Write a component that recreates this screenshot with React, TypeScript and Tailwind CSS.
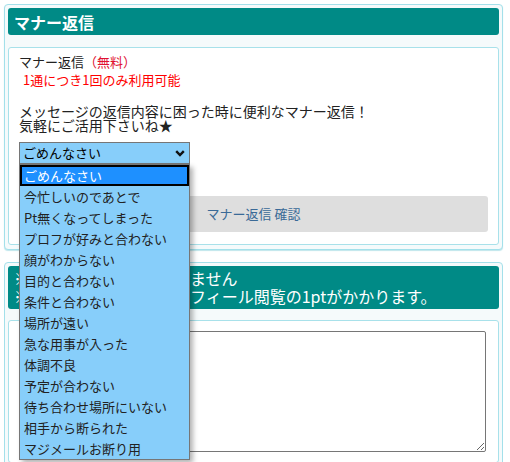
import React from 'react';

const reasons = [
  'ごめんなさい',
  '今忙しいのであとで',
  'Pt無くなってしまった',
  'プロフが好みと合わない',
  '顔がわからない',
  '目的と合わない',
  '条件と合わない',
  '場所が遠い',
  '急な用事が入った',
  '体調不良',
  '予定が合わない',
  '待ち合わせ場所にいない',
  '相手から断られた',
  'マジメールお断り用',
];

function ReasonSelect() {
  return (
    <div className="relative w-[171px]">
      {/* closed select */}
      <div className="flex h-[22px] items-center justify-between border border-[#767676] bg-[#87cefa] pl-[3px] pr-[4px] text-[13px] text-black">
        <span>ごめんなさい</span>
        <svg width="10" height="7" viewBox="0 0 10 7" className="mt-[1px]">
          <path d="M1.2 1.2 L5 5 L8.8 1.2" fill="none" stroke="#111" strokeWidth="2.4" />
        </svg>
      </div>

      {/* open list */}
      <div className="absolute left-0 top-[22px] z-10 w-[171px] border border-[#767676] bg-[#87cefa] shadow-[3px_3px_5px_rgba(0,0,0,0.3)]">
        {reasons.map((r, i) => (
          <div
            key={r}
            className={`flex h-[21px] items-center pl-[4px] text-[13px] ${
              i === 0 ? 'bg-[#1e90ff] text-white outline-2 -outline-offset-2 outline-black' : 'text-[#222]'
            }`}
          >
            {r}
          </div>
        ))}
      </div>
    </div>
  );
}

export default function App() {
  return (
    <div
      className="h-[462px] overflow-hidden bg-white pl-[4px] pt-[4px]"
      style={{ fontFamily: '"Noto Sans CJK JP", "Noto Sans", sans-serif' }}
    >
      {/* manner reply card */}
      <div className="w-[499px] rounded-[4px] border border-[#a3e0ea] bg-[#f5fafb] p-[3px] pb-[4px] shadow-[0_1px_1px_#bfe6ec]">
        <div className="flex h-[27px] items-center rounded-[3px] bg-[#008a86] px-[6px] text-[16px] font-bold text-white">
          マナー返信
        </div>
        <div className="mt-[12px] rounded-[3px] border border-[#a8e1ea] bg-white px-[10px] pb-[12px] pt-[5px] text-[13px] text-[#222]">
          <p className="leading-[18px]">
            マナー返信<span className="text-[#e0102f]">（無料）</span>
          </p>
          <p className="pl-[4px] leading-[18px] text-[#ff0000]">1通につき1回のみ利用可能</p>
          <p className="mt-[15px] text-[14px] leading-[14px]">
            メッセージの返信内容に困った時に便利なマナー返信！
            <br />
            気軽にご活用下さいね★
          </p>
          <div className="mt-[10px]">
            <ReasonSelect />
          </div>
          <button className="mt-[32px] flex h-[36px] w-full items-center justify-center rounded-[3px] bg-[#dedede] text-[13px] text-[#3a6a97]">
            マナー返信 確認
          </button>
        </div>
      </div>

      {/* notes / message card */}
      <div className="mt-[12px] w-[499px] rounded-[4px] border border-[#a3e0ea] bg-[#f5fafb] p-[3px]">
        <div className="rounded-[3px] bg-[#008a86] px-[6px] pb-[4px] pt-[3px] text-[16px] leading-[18px] text-white">
          <p>※返信ポイントはかかりません</p>
          <p>※ただし、お相手のプロフィール閲覧の1ptがかかります。</p>
        </div>
        <div className="mt-[11px] rounded-[3px] border border-[#a8e1ea] bg-white px-[10px] pb-[10px] pt-[10px]">
          <textarea className="block h-[121px] w-[467px] rounded-[2px] border border-[#767676] bg-white" />
        </div>
      </div>
    </div>
  );
}
